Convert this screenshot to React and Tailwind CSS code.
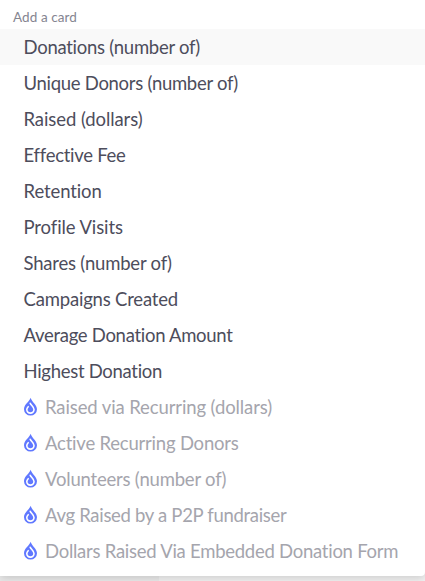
const cards = [
  { label: 'Donations (number of)', spacing: 'tracking-[-0.27px]', active: true },
  { label: 'Unique Donors (number of)', spacing: 'tracking-[-0.29px]' },
  { label: 'Raised (dollars)', spacing: 'tracking-[-0.08px]' },
  { label: 'Effective Fee', spacing: 'tracking-[-0.27px]' },
  { label: 'Retention', spacing: 'tracking-[-0.1px]' },
  { label: 'Profile Visits', spacing: 'tracking-[-0.1px]' },
  { label: 'Shares (number of)', spacing: 'tracking-[-0.2px]' },
  { label: 'Campaigns Created', spacing: 'tracking-[-0.19px]' },
  { label: 'Average Donation Amount', spacing: 'tracking-[-0.29px]' },
  { label: 'Highest Donation', spacing: 'tracking-[-0.29px]' },
  { label: 'Raised via Recurring (dollars)', spacing: 'tracking-[-0.11px]', locked: true },
  { label: 'Active Recurring Donors', spacing: 'tracking-[-0.21px]', locked: true },
  { label: 'Volunteers (number of)', spacing: 'tracking-[-0.2px]', locked: true },
  { label: 'Avg Raised by a P2P fundraiser', spacing: 'tracking-[-0.31px]', locked: true },
  { label: 'Dollars Raised Via Embedded Donation Form', spacing: 'tracking-[-0.26px]', locked: true },
];

function FlameIcon() {
  return (
    <svg width="14" height="20" viewBox="0 0 14 20" className="mr-[7.5px] shrink-0">
      <path d="M6.6 0.8C5.8 4.4 0 7.2 0 12.3a6.5 6.3 0 0 0 13 0C13 7.9 7.9 5.2 6.6 0.8Z" fill="#6078ff" />
      {/* ring with a slit running up to the tip */}
      <path
        d="M6.2 6.2C7 8.4 10 9.4 10 12.6a3.6 3.5 0 0 1-7.2 0C2.8 11.4 3.4 10.5 4.2 9.7"
        fill="none"
        stroke="#fff"
        strokeWidth="1.6"
        strokeLinecap="round"
      />
      <circle cx="6.2" cy="12" r="1.5" fill="#6078ff" />
    </svg>
  );
}

export default function App() {
  return (
    <div className="h-[581px] w-[425px] overflow-hidden bg-[linear-gradient(to_right,#eaeaea_159px,#f2f2f2_159px)] font-['Lato',sans-serif] antialiased">
      <div className="h-[576px] rounded-br-[4px] bg-white shadow-[0_2px_10px_rgba(0,0,0,0.17)]">
        <div className="h-[29px] pl-[13px] pt-[7px] text-[13.5px] leading-5 tracking-[0.08px] text-[#858591]">Add a card</div>
        <ul>
          {cards.map((card) => (
            <li
              key={card.label}
              className={`flex h-9 items-center whitespace-nowrap pl-[23.5px] text-[18.5px] ${card.spacing} ${
                card.active ? 'bg-[#f9f9f9]' : ''
              } ${card.locked ? 'text-[#a5a5ad]' : 'text-[#4d4d5c]'}`}
            >
              {card.locked && <FlameIcon />}
              <span className="pt-0.5">{card.label}</span>
            </li>
          ))}
        </ul>
      </div>
    </div>
  );
}
